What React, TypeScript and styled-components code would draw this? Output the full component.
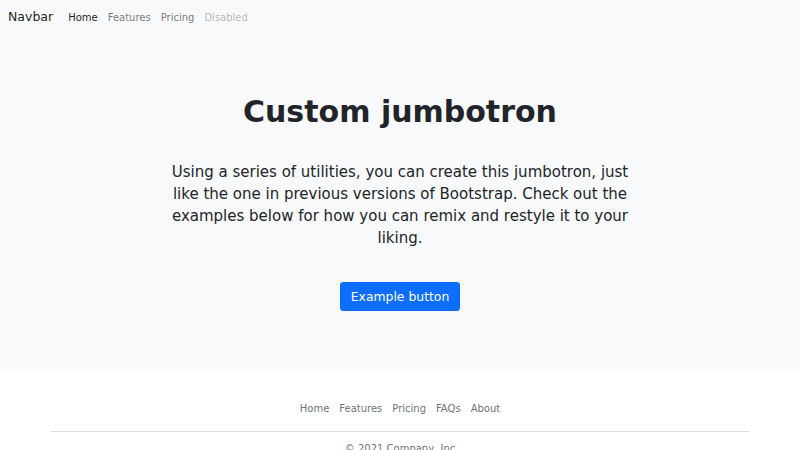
import styled, { createGlobalStyle } from "styled-components";

const GlobalStyle = createGlobalStyle`
  html, body {
    margin: 0;
    padding: 0;
    background: #fff;
    font-family: "DejaVu Sans", "Liberation Sans", sans-serif;
    color: #212529;
  }
  * {
    box-sizing: border-box;
  }
`;

const Top = styled.div`
  background: #f8f9fa;
`;

const Navbar = styled.nav`
  display: flex;
  align-items: center;
  height: 34px;
  padding: 0 8px;
`;

const Brand = styled.a`
  font-size: 12.5px;
  line-height: 18px;
  color: rgba(0, 0, 0, 0.9);
  text-decoration: none;
  margin-right: 10px;
`;

const NavList = styled.ul`
  display: flex;
  list-style: none;
  margin: 0;
  padding: 0;
`;

const NavLink = styled.a<{ $state?: "active" | "disabled" }>`
  display: block;
  padding: 0 5px;
  font-size: 10px;
  line-height: 15px;
  text-decoration: none;
  color: ${(p) =>
    p.$state === "active"
      ? "rgba(0, 0, 0, 0.9)"
      : p.$state === "disabled"
      ? "rgba(0, 0, 0, 0.3)"
      : "rgba(0, 0, 0, 0.55)"};
`;

const Hero = styled.section`
  display: flex;
  flex-direction: column;
  align-items: center;
  text-align: center;
  padding: 60px 0;
`;

const Title = styled.h1`
  margin: 0 0 31px;
  font-size: 30px;
  line-height: 36px;
  font-weight: 700;
  color: #212529;
`;

const Lead = styled.p`
  margin: 0 0 33px;
  width: 470px;
  font-size: 15px;
  line-height: 22px;
  color: #212529;
`;

const Button = styled.button`
  height: 29px;
  padding: 0 10px;
  font-family: inherit;
  font-size: 12.4px;
  color: #fff;
  background: #0d6efd;
  border: 1px solid #0d6efd;
  border-radius: 3px;
  cursor: pointer;
`;

const Footer = styled.footer`
  width: 700px;
  margin: 0 auto;
  padding-top: 30px;
`;

const FooterNav = styled.ul`
  display: flex;
  justify-content: center;
  list-style: none;
  margin: 0;
  padding: 0 0 15px;
  border-bottom: 1px solid #dee2e6;
`;

const FooterLink = styled.a`
  display: block;
  padding: 0 5px;
  font-size: 10px;
  line-height: 15px;
  color: #6c757d;
  text-decoration: none;
`;

const Copyright = styled.p`
  margin: 9px 0 0;
  text-align: center;
  font-size: 10px;
  line-height: 15px;
  color: #6c757d;
`;

const navItems: { label: string; state?: "active" | "disabled" }[] = [
  { label: "Home", state: "active" },
  { label: "Features" },
  { label: "Pricing" },
  { label: "Disabled", state: "disabled" },
];

const footerItems = ["Home", "Features", "Pricing", "FAQs", "About"];

export default function App() {
  return (
    <>
      <GlobalStyle />
      <Top>
        <Navbar>
          <Brand href="#">Navbar</Brand>
          <NavList>
            {navItems.map((item) => (
              <li key={item.label}>
                <NavLink href="#" $state={item.state}>
                  {item.label}
                </NavLink>
              </li>
            ))}
          </NavList>
        </Navbar>
        <Hero>
          <Title>Custom jumbotron</Title>
          <Lead>
            Using a series of utilities, you can create this jumbotron, just like the one in
            previous versions of Bootstrap. Check out the examples below for how you can remix
            and restyle it to your liking.
          </Lead>
          <Button type="button">Example button</Button>
        </Hero>
      </Top>
      <Footer>
        <FooterNav>
          {footerItems.map((label) => (
            <li key={label}>
              <FooterLink href="#">{label}</FooterLink>
            </li>
          ))}
        </FooterNav>
        <Copyright>© 2021 Company, Inc</Copyright>
      </Footer>
    </>
  );
}
